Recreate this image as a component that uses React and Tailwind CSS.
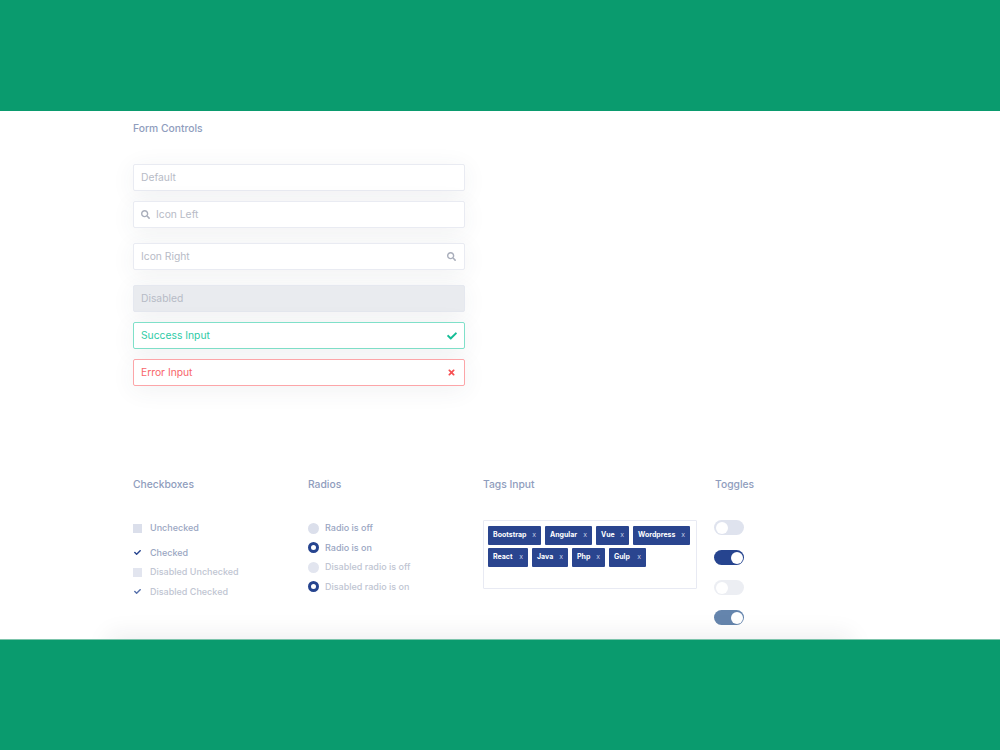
import React from "react";
import { FaSearch, FaCheck, FaTimes } from "react-icons/fa";

const font = { fontFamily: "Inter, 'Open Sans', sans-serif" };

function Field({ label, className = "", textClass = "text-[#b7bbc6]", left, right }) {
  return (
    <div className={`h-[27px] w-[331.5px] flex items-center rounded-[2px] border px-[7px] text-[10.3px] shadow-[0_4px_24px_rgba(60,70,90,0.07)] ${className}`}>
      {left}
      <span className={`flex-1 pt-[1px] ${textClass}`}>{label}</span>
      {right}
    </div>
  );
}

function Heading({ children }) {
  return <h3 className="text-[10.3px] leading-4 font-medium text-[#8f9dbd]">{children}</h3>;
}

function CheckRow({ checked, disabled, label, className = "" }) {
  return (
    <div className={`flex items-center h-[14px] ${className}`}>
      <span className="w-[9px] h-[9px] mr-[8px] flex items-center justify-center">
        {checked ? (
          <FaCheck size={7} className={disabled ? "text-[#5670ab]" : "text-[#26448f]"} />
        ) : (
          <span className={`w-[9px] h-[9px] block ${disabled ? "bg-[#e2e5ef]" : "bg-[#dbdfeb]"}`} />
        )}
      </span>
      <span className={`text-[9px] font-medium ${disabled ? "text-[#c0c5d2]" : "text-[#9aa6c2]"}`}>{label}</span>
    </div>
  );
}

function RadioRow({ on, disabled, label }) {
  return (
    <div className="flex items-center h-[14px] mb-[5.6px]">
      <span className={`w-[11px] h-[11px] rounded-full mr-[6px] shrink-0 ${on ? "border-[3px] border-[#26448f] bg-white" : disabled ? "bg-[#e2e5ef]" : "bg-[#dbdfeb]"}`} />
      <span className={`text-[9px] font-medium ${disabled ? "text-[#c0c5d2]" : "text-[#9aa6c2]"}`}>{label}</span>
    </div>
  );
}

function Tag({ name, width }) {
  return (
    <span style={{ width }} className="h-[19px] flex items-center justify-between px-[5px] rounded-[1px] bg-[#2a458f] text-white text-[7px] font-bold">
      {name}
      <span className="text-[7px] font-normal text-[#c4cde4]">x</span>
    </span>
  );
}

function Toggle({ on, disabled }) {
  const track = on
    ? disabled
      ? "bg-[#6585ad] justify-end"
      : "bg-[#26448f] justify-end"
    : disabled
    ? "bg-[#eceef3] justify-start"
    : "bg-[#dfe3ee] justify-start";
  return (
    <span className={`w-[30px] h-[15px] rounded-full flex items-center px-[1.5px] mb-[15px] ${track}`}>
      <span className="w-[12px] h-[12px] rounded-full bg-white" />
    </span>
  );
}

export default function App() {
  return (
    <div style={font} className="w-full h-[750px] bg-white flex flex-col overflow-hidden">
      <div className="h-[111px] bg-[#0a9b6e]" />
      <main className="relative h-[528px] px-[133px] overflow-hidden">
        <div className="pt-[9px]">
          <Heading>Form Controls</Heading>
        </div>
        <div className="mt-[28px] flex flex-col">
          <Field label="Default" className="border-[#e9ebf2] bg-white" />
          <Field
            label="Icon Left"
            className="mt-[10px] border-[#e9ebf2] bg-white"
            left={<FaSearch size={9} className="text-[#a9aebb] mr-[6px]" />}
          />
          <Field
            label="Icon Right"
            className="mt-[15px] border-[#e9ebf2] bg-white"
            right={<FaSearch size={9} className="text-[#a9aebb] mr-[1px]" />}
          />
          <Field label="Disabled" className="mt-[15px] border-[#e5e8ef] bg-[#e9ebef]" />
          <Field
            label="Success Input"
            textClass="text-[#2dcba6]"
            className="mt-[10px] border-[#7fe0c9] bg-white"
            right={<FaCheck size={10} className="text-[#14bd96]" />}
          />
          <Field
            label="Error Input"
            textClass="text-[#f8666a]"
            className="mt-[10px] border-[#fca5a8] bg-white"
            right={<FaTimes size={9} className="text-[#f74f52] mr-[1px]" />}
          />
        </div>

        <div className="mt-[90px] flex">
          <div className="w-[175px]">
            <Heading>Checkboxes</Heading>
            <div className="mt-[29px]">
              <CheckRow label="Unchecked" />
              <CheckRow checked label="Checked" className="mt-[10.5px]" />
              <CheckRow disabled label="Disabled Unchecked" className="mt-[5.5px]" />
              <CheckRow checked disabled label="Disabled Checked" className="mt-[5.5px]" />
            </div>
          </div>
          <div className="w-[175px]">
            <Heading>Radios</Heading>
            <div className="mt-[29px]">
              <RadioRow label="Radio is off" />
              <RadioRow on label="Radio is on" />
              <RadioRow disabled label="Disabled radio is off" />
              <RadioRow on disabled label="Disabled radio is on" />
            </div>
          </div>
          <div className="w-[232px]">
            <Heading>Tags Input</Heading>
            <div className="mt-[28px] w-[214px] h-[69px] border border-[#e8eaf3] rounded-[1px] pt-[5px] pl-[4px] flex flex-col gap-[2.5px]">
              <div className="flex gap-[4px]">
                <Tag name="Bootstrap" width={53} />
                <Tag name="Angular" width={47} />
                <Tag name="Vue" width={33} />
                <Tag name="Wordpress" width={57} />
              </div>
              <div className="flex gap-[4px]">
                <Tag name="React" width={40} />
                <Tag name="Java" width={36} />
                <Tag name="Php" width={33} />
                <Tag name="Gulp" width={37} />
              </div>
            </div>
          </div>
          <div className="flex flex-col">
            <Heading>Toggles</Heading>
            <div className="mt-[28px] -ml-[1px] flex flex-col">
              <Toggle />
              <Toggle on />
              <Toggle disabled />
              <Toggle on disabled />
            </div>
          </div>
        </div>
        <div className="absolute left-[115px] top-[530px] w-[730px] h-[20px] shadow-[0_0_24px_6px_rgba(40,40,50,0.08)]" />
      </main>
      <div className="flex-1 bg-[#0a9b6e] border-t border-[#7cc4ab]" />
    </div>
  );
}
